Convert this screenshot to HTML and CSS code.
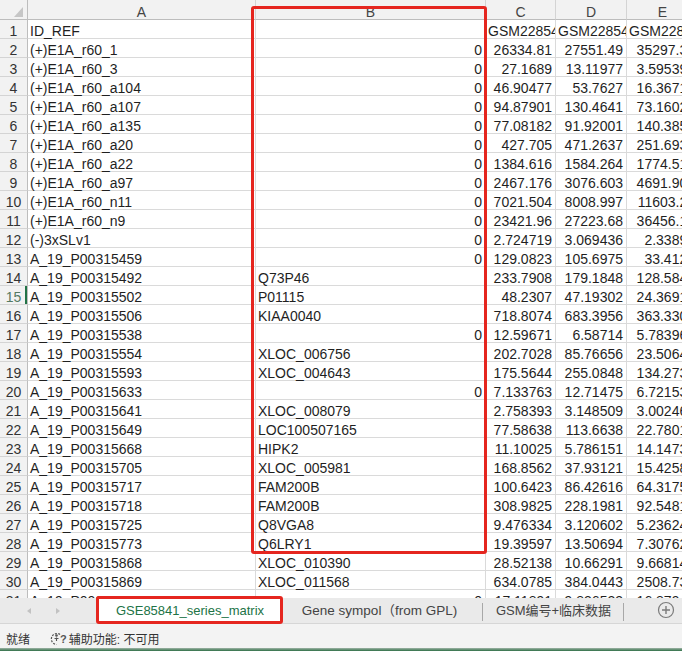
FILE: index.html
```html
<!DOCTYPE html>
<html>
<head>
    <title>GSE85841_series_matrix</title>
    <meta charset="utf-8">
    <link rel="stylesheet" href="styles.css">
</head>
<body>
<div class="app">
    <div class="sheet">
        <div class="grid" id="grid">
            <div class="corner"><span class="corner-tri"></span></div>
            <div class="col-head">A</div>
            <div class="col-head">B</div>
            <div class="col-head">C</div>
            <div class="col-head">D</div>
            <div class="col-head">E</div>
        </div>
        <div class="mark-col"></div>
    </div>

    <div class="tabbar">
        <div class="tab-nav">
            <span class="nav-left"></span>
            <span class="nav-right"></span>
        </div>
        <div class="tab tab-active">GSE85841_series_matrix</div>
        <div class="tab tab-gene">Gene sympol（from GPL)</div>
        <div class="tab tab-gsm">GSM编号+临床数据</div>
        <div class="tab-add">
            <svg width="18" height="18" viewBox="0 0 18 18">
                <circle cx="9" cy="9" r="7.5" fill="none" stroke="#7b7b7b" stroke-width="1.2"/>
                <path d="M9 5v8M5 9h8" stroke="#7b7b7b" stroke-width="1.4"/>
            </svg>
        </div>
    </div>

    <div class="statusbar">
        <span class="status-ready">就绪</span>
        <span class="a11y">
            <svg width="13" height="15" viewBox="0 0 13 15">
                <path d="M10 3.5A5.5 5.5 0 1 0 6.5 13.5" fill="none" stroke="#555" stroke-width="1.2" stroke-dasharray="2 1.3"/>
                <circle cx="6.5" cy="4.5" r="1.3" fill="#555"/>
                <path d="M6.5 6.5v3.5M4.5 7.5h4" stroke="#555" stroke-width="1.1"/>
            </svg><span class="a11y-q">?</span>辅助功能: 不可用
        </span>
    </div>
</div>
<script>
    // Sheet data, column A..E. E is cut off by the window edge.
    const rows = [
        ['ID_REF', '', 'GSM2285412', 'GSM2285413', 'GSM2285414'],
        ['(+)E1A_r60_1', '0', '26334.81', '27551.49', '35297.31'],
        ['(+)E1A_r60_3', '0', '27.1689', '13.11977', '3.595391'],
        ['(+)E1A_r60_a104', '0', '46.90477', '53.7627', '16.36712'],
        ['(+)E1A_r60_a107', '0', '94.87901', '130.4641', '73.16024'],
        ['(+)E1A_r60_a135', '0', '77.08182', '91.92001', '140.3852'],
        ['(+)E1A_r60_a20', '0', '427.705', '471.2637', '251.6937'],
        ['(+)E1A_r60_a22', '0', '1384.616', '1584.264', '1774.512'],
        ['(+)E1A_r60_a97', '0', '2467.176', '3076.603', '4691.904'],
        ['(+)E1A_r60_n11', '0', '7021.504', '8008.997', '11603.25'],
        ['(+)E1A_r60_n9', '0', '23421.96', '27223.68', '36456.19'],
        ['(-)3xSLv1', '0', '2.724719', '3.069436', '2.33891'],
        ['A_19_P00315459', '0', '129.0823', '105.6975', '33.4127'],
        ['A_19_P00315492', 'Q73P46', '233.7908', '179.1848', '128.5843'],
        ['A_19_P00315502', 'P01115', '48.2307', '47.19302', '24.36915'],
        ['A_19_P00315506', 'KIAA0040', '718.8074', '683.3956', '363.3307'],
        ['A_19_P00315538', '0', '12.59671', '6.58714', '5.783962'],
        ['A_19_P00315554', 'XLOC_006756', '202.7028', '85.76656', '23.50641'],
        ['A_19_P00315593', 'XLOC_004643', '175.5644', '255.0848', '134.2735'],
        ['A_19_P00315633', '0', '7.133763', '12.71475', '6.721538'],
        ['A_19_P00315641', 'XLOC_008079', '2.758393', '3.148509', '3.002468'],
        ['A_19_P00315649', 'LOC100507165', '77.58638', '113.6638', '22.78015'],
        ['A_19_P00315668', 'HIPK2', '11.10025', '5.786151', '14.14736'],
        ['A_19_P00315705', 'XLOC_005981', '168.8562', '37.93121', '15.42586'],
        ['A_19_P00315717', 'FAM200B', '100.6423', '86.42616', '64.31752'],
        ['A_19_P00315718', 'FAM200B', '308.9825', '228.1981', '92.54813'],
        ['A_19_P00315725', 'Q8VGA8', '9.476334', '3.120602', '5.236241'],
        ['A_19_P00315773', 'Q6LRY1', '19.39597', '13.50694', '7.307625'],
        ['A_19_P00315868', 'XLOC_010390', '28.52138', '10.66291', '9.668147'],
        ['A_19_P00315869', 'XLOC_011568', '634.0785', '384.0443', '2508.736'],
        ['A_19_P00315903', '0', '17.11891', '9.836523', '16.87942']
    ];

    const grid = document.getElementById('grid');
    const activeRow = 15;

    rows.forEach(function (row, i) {
        const head = document.createElement('div');
        head.className = 'row-head' + (i + 1 === activeRow ? ' row-head-active' : '');
        head.textContent = i + 1;
        grid.appendChild(head);

        for (const value of row) {
            const cell = document.createElement('div');
            // Numbers sit on the right, like Excel does it.
            cell.className = /^-?[\d.]+$/.test(value) ? 'cell cell-num' : 'cell';
            cell.textContent = value;
            grid.appendChild(cell);
        }
    });
</script>
</body>
</html>
```

FILE: styles.css
```css
* {
    box-sizing: border-box;
}

body {
    margin: 0;
    overflow: hidden;
    background: #fff;
    font-family: "Liberation Sans", "Noto Sans CJK SC", sans-serif;
    color: #1f1f1f;
}

.app {
    display: flex;
    flex-direction: column;
    width: 682px;
    height: 652px;
}

.sheet {
    position: relative;
    height: 598px;
    flex: none;
}

.grid {
    display: grid;
    grid-template-columns: 28px 228px 230px 70px 71px 72px;
    grid-template-rows: 20px;
    grid-auto-rows: 19px;
    width: 699px;
    height: 598px;
    overflow: hidden;
    font-size: 14px;
}

.corner {
    position: relative;
    background: #f2f2f2;
    border-right: 1px solid #bdbdbd;
    border-bottom: 1px solid #bdbdbd;
}

.corner-tri {
    position: absolute;
    right: 4px;
    bottom: 2px;
    width: 0;
    height: 0;
    border-left: 9px solid transparent;
    border-bottom: 10px solid #c6c6c6;
}

.col-head {
    background: #f2f2f2;
    border-right: 1px solid #d4d4d4;
    border-bottom: 1px solid #bdbdbd;
    text-align: center;
    padding-top: 3px;
    line-height: 18px;
    color: #444;
    overflow: hidden;
}

.row-head {
    background: #f2f2f2;
    border-right: 1px solid #bdbdbd;
    border-bottom: 1px solid #d4d4d4;
    text-align: center;
    padding-top: 2px;
    line-height: 18px;
    color: #333;
    overflow: hidden;
}

.row-head-active {
    color: #557a63;
    box-shadow: inset -2px 0 0 #217346;
}

/* clip sideways only, so underscores can dip onto the gridline */
.cell {
    border-right: 1px solid #dadada;
    border-bottom: 1px solid #dadada;
    padding: 2px 2px 0;
    line-height: 18px;
    white-space: nowrap;
    overflow-x: clip;
    overflow-y: visible;
}

.cell-num {
    text-align: right;
    padding-right: 3px;
}

/* red highlight drawn over column B */
.mark-col {
    position: absolute;
    left: 251px;
    top: 6px;
    width: 236px;
    height: 548px;
    border: 3px solid #e5261f;
    border-radius: 3px;
}

.tabbar {
    display: flex;
    align-items: flex-start;
    height: 26px;
    flex: none;
    background: #eaeaea;
    border-bottom: 1px solid #d6d6d6;
    font-size: 13px;
    color: #444;
}

.tab-nav {
    position: relative;
    width: 98px;
    height: 25px;
}

.nav-left,
.nav-right {
    position: absolute;
    top: 10px;
    width: 0;
    height: 0;
    border-top: 3px solid transparent;
    border-bottom: 3px solid transparent;
}

.nav-left {
    left: 27px;
    border-right: 4px solid #c2c2c2;
}

.nav-right {
    left: 56px;
    border-left: 4px solid #c2c2c2;
}

.tab {
    position: relative;
    height: 24px;
    line-height: 25px;
    text-align: center;
    white-space: nowrap;
}

.tab-active {
    width: 184px;
    background: #fff;
    color: #217346;
}

.tab-active::after {
    content: "";
    position: absolute;
    left: -2px;
    right: -1px;
    top: -2px;
    bottom: -2px;
    border: 3px solid #e5261f;
    border-radius: 3px;
}

.tab-gene {
    width: 201px;
    padding-right: 6px;
    font-size: 13.5px;
}

.tab-gsm {
    width: 141px;
}

.tab-gene::after,
.tab-gsm::after {
    content: "";
    position: absolute;
    right: 0;
    top: 5px;
    height: 18px;
    border-right: 1px solid #a8a8a8;
}

.tab-add {
    padding: 3px 0 0 33px;
}

.statusbar {
    display: flex;
    align-items: center;
    height: 24px;
    flex: none;
    padding: 5px 0 0 6px;
    background: #f3f3f3;
    font-size: 12px;
    color: #333;
}

.a11y {
    display: flex;
    align-items: center;
    margin-left: 20px;
}

.a11y-q {
    font-weight: bold;
    font-size: 11px;
    color: #555;
    margin: 0 2px 0 -3px;
}

.app::after {
    content: "";
    height: 3px;
    background: linear-gradient(#9fb4a6, #2f6f47);
}
```
